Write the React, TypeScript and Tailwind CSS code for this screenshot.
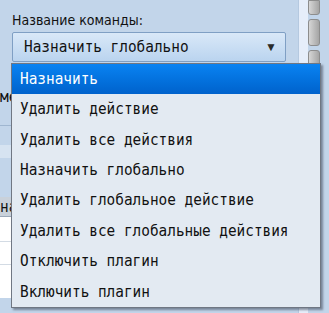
const items = [
  "Назначить",
  "Удалить действие",
  "Удалить все действия",
  "Назначить глобально",
  "Удалить глобальное действие",
  "Удалить все глобальные действия",
  "Отключить плагин",
  "Включить плагин",
];

const mono = "inline-block origin-left scale-x-[0.872] whitespace-nowrap text-[16.5px] [font-family:'DejaVu_Sans_Mono',monospace]";

export default function App() {
  return (
    <div className="relative w-[329px] h-[313px] overflow-hidden bg-[#c2d5ea] flex">
      <div className="flex flex-col w-[298px]">
        <div className="pl-3 pt-[10px] text-[14px] leading-[21px] text-[#111] [font-stretch:condensed] [font-family:'DejaVu_Sans_Condensed','DejaVu_Sans',sans-serif]">
          Название команды:
        </div>
        <div className="ml-3 mt-[1px] w-[274px] h-[30px] rounded-[2px] border border-[#7f9fc4] bg-gradient-to-b from-[#d9e8f8] to-[#bad4ef] flex items-center justify-between pl-[11px] pr-[8px] text-[#111]">
          <span className={mono}>Назначить глобально</span>
          <span className="text-[12px] text-[#2a2a2a]">▼</span>
        </div>
        {/* content behind the popup */}
        <div className="mt-[24px] flex flex-col">
          <div className="h-[20px] leading-[20px] text-[#111]">
            <span className={mono}>ме</span>
          </div>
          <div className="h-[20px] border-b border-[#9fb6d0]"></div>
          <div className="h-[19px]"></div>
          <div className="h-[13px] bg-[#d6e3f1]"></div>
          <div className="h-[39px]"></div>
          <div className="h-[20px] bg-[#c9d1da] border-b border-[#9aa8b8] leading-[19px] text-[#111]">
            <span className={mono}>на</span>
          </div>
          <div className="h-[25px] bg-white border-b border-[#d3dbe4]"></div>
          <div className="h-[23px] bg-white border-b border-[#d3dbe4]"></div>
          <div className="h-[33px] bg-white"></div>
        </div>
      </div>
      <div className="w-[10px] h-full bg-[#e6eefa] border-l border-[#b5c9e0]"></div>
      <div className="w-[12px] flex flex-col gap-[4px]">
        <div className="h-[15px] rounded-b-[3px] bg-gradient-to-r from-[#d6d6d6] to-[#a5a5a5] border border-[#8d8d8d]"></div>
        <div className="h-[27px] rounded-[3px] bg-gradient-to-r from-[#d6d6d6] to-[#a5a5a5] border border-[#8d8d8d]"></div>
        <div className="h-[27px] rounded-[3px] bg-gradient-to-r from-[#d6d6d6] to-[#a5a5a5] border border-[#8d8d8d]"></div>
      </div>

      <div className="absolute left-[11px] top-[63px] w-[310px] bg-[#e3eaf2] border border-[#707783] shadow-[2px_2px_2px_rgba(60,70,85,0.55)]">
        {items.map((item, i) => (
          <div
            key={i}
            className={
              i === 0
                ? "h-[30.4px] flex items-center pl-[8px] text-white bg-gradient-to-b from-[#0a83f2] to-[#0062cc]"
                : "h-[30.4px] flex items-center pl-[8px] text-[#111]"
            }
          >
            <span className={mono}>{item}</span>
          </div>
        ))}
      </div>
    </div>
  );
}
